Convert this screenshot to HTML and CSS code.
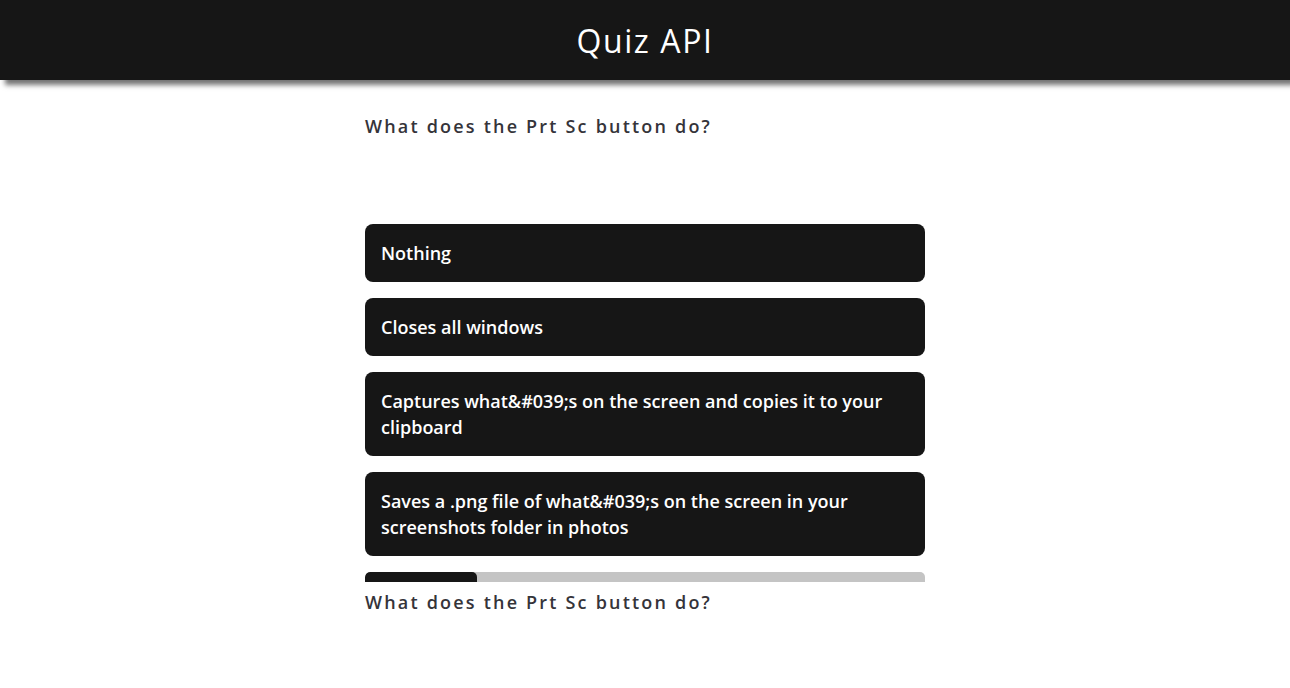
FILE: index.html
```html
<!DOCTYPE html>
<html>
<head>
<meta charset="utf-8">
<link rel="stylesheet" href="styles.css">
</head>
<body>
<header class="topbar">
  <h1 class="title">Quiz API</h1>
</header>
<main class="quiz">
  <p class="question">What does the Prt Sc button do?</p>
  <div class="answers">
    <button class="answer">Nothing</button>
    <button class="answer">Closes all windows</button>
    <button class="answer">Captures what&amp;#039;s on the screen and copies it to your clipboard</button>
    <button class="answer">Saves a .png file of what&amp;#039;s on the screen in your screenshots folder in photos</button>
  </div>
  <div class="progress"><div class="progress-fill" style="width:20%"></div></div>
  <p class="question question-bottom">What does the Prt Sc button do?</p>
</main>
</body>
</html>
```
FILE: styles.css
```css
* { box-sizing: border-box; }
html, body { margin: 0; padding: 0; background: #fff; }
body { font-family: "Open Sans", "Noto Sans", sans-serif; }
.topbar {
  height: 80px;
  background: #161616;
  box-shadow: 5px 5px 5px rgba(0,0,0,0.55);
  display: flex;
  align-items: center;
  justify-content: center;
}
.title {
  margin: 0;
  color: #fff;
  font-weight: 400;
  font-size: 32px;
  letter-spacing: 1.6px;
}
.quiz {
  width: 560px;
  margin: 0 auto;
  display: flex;
  flex-direction: column;
}
.question {
  margin: 34px 0 0;
  font-size: 18px;
  font-weight: 600;
  line-height: 24px;
  letter-spacing: 2.2px;
  color: #35343a;
}
.answers {
  margin-top: 86px;
  display: flex;
  flex-direction: column;
  gap: 16px;
}
.answer {
  background: #161616;
  color: #fff;
  border: 0;
  border-radius: 8px;
  padding: 16px;
  text-align: left;
  font-family: inherit;
  font-size: 18px;
  font-weight: 600;
  line-height: 26px;
}
.progress {
  margin-top: 16px;
  height: 10px;
  background: #c4c4c4;
  border-radius: 5px 5px 0 0;
  overflow: hidden;
}
.progress-fill {
  height: 100%;
  background: #161616;
  border-radius: 5px 5px 0 0;
}
.question-bottom { margin-top: 8px; }
```
